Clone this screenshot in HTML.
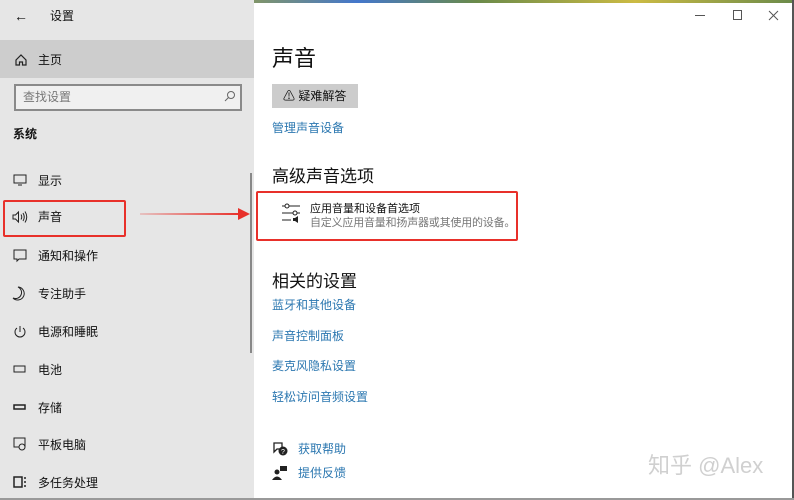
<!DOCTYPE html>
<html><head><meta charset="utf-8"><style>
*{margin:0;padding:0;box-sizing:border-box}
body{width:794px;height:500px;overflow:hidden;position:relative;background:#fff;font-family:"Liberation Sans","Noto Sans CJK SC",sans-serif;color:#111}
.a{position:absolute;white-space:nowrap;line-height:1}
#left{position:absolute;left:0;top:0;width:254px;height:500px;background:#e6e6e6}
.it{font-size:12px}
.lk{font-size:12px;color:#2b77b0}
svg{position:absolute}
</style></head><body>
<div class="a" style="left:0;top:0;width:794px;height:3px;background:linear-gradient(90deg,#6a8a4a,#4caf50 10%,#fff 14%,#8a9a5a 30%,#4477cc 45%,#6a8a4a 60%,#ccbb44 80%,#6a8a4a)"></div>
<div id="left">
 <div class="a" style="left:0;top:40px;width:254px;height:38px;background:#cdcdcd"></div>
 <div class="a" style="left:14px;top:9px;font-size:14px">←</div>
 <div class="a it" style="left:50px;top:10px">设置</div>
 <svg style="left:14px;top:53px" width="14" height="14" viewBox="0 0 14 14"><path d="M2 7 L7 2 L12 7 V12 H8.5 V9 H5.5 V12 H2Z" fill="none" stroke="#222" stroke-width="1.2"/></svg>
 <div class="a it" style="left:38px;top:54px">主页</div>
 <div class="a" style="left:14px;top:84px;width:228px;height:27px;border:2px solid #8a8a8a;background:#f0f0f0"></div>
 <div class="a" style="left:23px;top:91px;font-size:12px;color:#777">查找设置</div>
 <svg style="left:223px;top:90px" width="13" height="13" viewBox="0 0 13 13"><circle cx="8" cy="5" r="3.5" fill="none" stroke="#666"/><path d="M5.5 7.5 L2 11" stroke="#666"/></svg>
 <div class="a" style="left:13px;top:128px;font-size:12px;font-weight:bold">系统</div>
 <svg style="left:13px;top:174px" width="14" height="12"><rect x="1" y="1" width="12" height="8" fill="none" stroke="#222"/><path d="M5 11 H9" stroke="#222"/></svg>
 <div class="a it" style="left:38px;top:175px">显示</div>
 <svg style="left:12px;top:210px" width="16" height="14" viewBox="0 0 16 14"><path d="M1 5 H3.5 L6.5 2 V12 L3.5 9 H1Z" fill="none" stroke="#222"/><path d="M9 4.5 Q10.5 7 9 9.5 M11 3 Q13.5 7 11 11 M13 1.5 Q16.5 7 13 12.5" fill="none" stroke="#222"/></svg>
 <div class="a it" style="left:38px;top:211px">声音</div>
 <svg style="left:13px;top:249px" width="14" height="14"><path d="M1 1 H13 V10 H6 L4 12 V10 H1Z" fill="none" stroke="#222"/></svg>
 <div class="a it" style="left:38px;top:250px">通知和操作</div>
 <svg style="left:12px;top:286px" width="15" height="15" viewBox="0 0 15 15"><path d="M6 1 A6.5 6.5 0 1 1 1 12 A6 6 0 0 0 6 1Z" fill="none" stroke="#222"/></svg>
 <div class="a it" style="left:38px;top:288px">专注助手</div>
 <svg style="left:13px;top:325px" width="14" height="14"><path d="M4 3 A5 5 0 1 0 10 3" fill="none" stroke="#222"/><path d="M7 1 V7" stroke="#222"/></svg>
 <div class="a it" style="left:38px;top:326px">电源和睡眠</div>
 <svg style="left:13px;top:364px" width="14" height="10"><rect x="1" y="2" width="11" height="6" fill="none" stroke="#222"/></svg>
 <div class="a it" style="left:38px;top:364px">电池</div>
 <svg style="left:13px;top:402px" width="14" height="10"><rect x="1" y="3" width="11" height="4" fill="none" stroke="#222" stroke-width="1.5"/></svg>
 <div class="a it" style="left:38px;top:402px">存储</div>
 <svg style="left:13px;top:437px" width="14" height="14"><rect x="1" y="1" width="11" height="9" fill="none" stroke="#222"/><circle cx="9" cy="10" r="3" fill="#e6e6e6" stroke="#222"/></svg>
 <div class="a it" style="left:38px;top:439px">平板电脑</div>
 <svg style="left:13px;top:476px" width="14" height="14"><rect x="1" y="1" width="8" height="10" fill="none" stroke="#222" stroke-width="1.5"/><path d="M12 1 V11" stroke="#222" stroke-width="1.5" stroke-dasharray="2 2"/></svg>
 <div class="a it" style="left:38px;top:477px">多任务处理</div>
 <div class="a" style="left:250px;top:173px;width:2px;height:180px;background:#888"></div>
</div>
<div class="a" style="left:3px;top:200px;width:123px;height:37px;border:2px solid #e8302a;border-radius:2px"></div>
<div class="a" style="left:140px;top:213px;width:100px;height:2px;background:linear-gradient(90deg,rgba(232,48,42,0.2),#e8302a)"></div>
<svg style="left:238px;top:208px" width="12" height="12"><path d="M0 0 L12 6 L0 12Z" fill="#e8302a"/></svg>

<div class="a" style="left:695px;top:15px;width:10px;height:1px;background:#555"></div>
<div class="a" style="left:733px;top:10px;width:9px;height:10px;border:1px solid #555"></div>
<svg style="left:768px;top:10px" width="11" height="11"><path d="M1 1 L10 10 M10 1 L1 10" stroke="#555"/></svg>
<div class="a" style="left:272px;top:48px;font-size:22px">声音</div>
<div class="a" style="left:272px;top:84px;width:86px;height:24px;background:#cccccc"></div>
<div class="a" style="left:283px;top:90px;font-size:12px">⚠︎ 疑难解答</div>
<div class="a lk" style="left:272px;top:122px">管理声音设备</div>
<div class="a" style="left:272px;top:168px;font-size:17px">高级声音选项</div>
<div class="a" style="left:256px;top:191px;width:262px;height:50px;border:2px solid #e8302a;border-radius:2px"></div>
<svg style="left:281px;top:202px" width="22" height="22"><path d="M1 4 H19 M1 11 H19 M1 18 H10" stroke="#222"/><circle cx="6" cy="4" r="2" fill="#fff" stroke="#222"/><circle cx="14" cy="11" r="2" fill="#fff" stroke="#222"/><path d="M12 16 h2 l3 -2 v7 l-3 -2 h-2z" fill="#222"/></svg>
<div class="a" style="left:310px;top:204px;font-size:11px">应用音量和设备首选项</div>
<div class="a" style="left:310px;top:218px;font-size:11px;color:#777;letter-spacing:-0.2px">自定义应用音量和扬声器或其使用的设备。</div>
<div class="a" style="left:272px;top:273px;font-size:17px">相关的设置</div>
<div class="a lk" style="left:272px;top:299px">蓝牙和其他设备</div>
<div class="a lk" style="left:272px;top:330px">声音控制面板</div>
<div class="a lk" style="left:272px;top:360px">麦克风隐私设置</div>
<div class="a lk" style="left:272px;top:391px">轻松访问音频设置</div>
<svg style="left:272px;top:441px" width="16" height="16"><path d="M2 2 H10 V8 H5 L2 11Z" fill="none" stroke="#222" stroke-width="1.3"/><circle cx="11" cy="10" r="4.5" fill="#222"/><text x="9" y="13" font-size="7" fill="#fff" font-family="Liberation Sans">?</text></svg>
<div class="a lk" style="left:298px;top:443px">获取帮助</div>
<svg style="left:272px;top:465px" width="16" height="16"><circle cx="5" cy="7" r="2.5" fill="#222"/><path d="M0 15 Q5 8 10 15Z" fill="#222"/><rect x="8" y="1" width="7" height="5" fill="#222"/></svg>
<div class="a lk" style="left:298px;top:467px">提供反馈</div>
<div class="a" style="left:648px;top:455px;font-size:22px;color:#d0d0d0">知乎 @Alex</div>
<div class="a" style="left:792px;top:0;width:2px;height:500px;background:#555"></div>
<div class="a" style="left:0;top:498px;width:794px;height:2px;background:#999"></div>
</body></html>
